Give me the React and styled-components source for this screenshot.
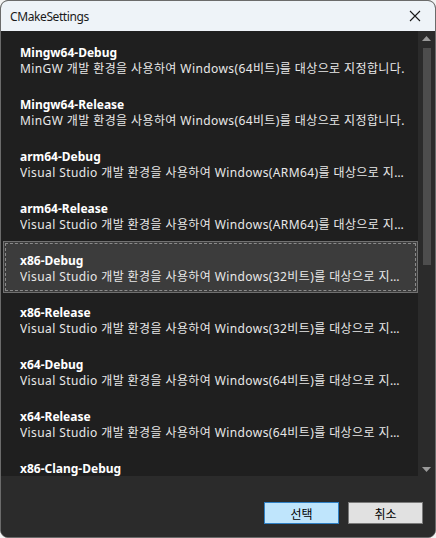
import styled, { createGlobalStyle } from 'styled-components';

const GlobalStyle = createGlobalStyle`
  html, body {
    margin: 0;
    padding: 0;
    background: #f3f3f3;
  }
  * {
    box-sizing: border-box;
  }
`;

const Window = styled.div`
  display: flex;
  flex-direction: column;
  width: 436px;
  height: 538px;
  border: 1px solid #6b6b6b;
  border-radius: 8px;
  overflow: hidden;
  background: #2b2b2b;
  font-family: "Noto Sans", "Noto Sans CJK KR", sans-serif;
  font-size: 12px;
`;

const TitleBar = styled.div`
  display: flex;
  align-items: center;
  justify-content: space-between;
  height: 30px;
  padding: 0 14px 0 9px;
  background: #eef3f8;
  color: #1a1a1a;

  span {
    font-size: 12px;
    letter-spacing: -0.4px;
  }
`;

const Body = styled.div`
  display: flex;
  height: 445px;
  background: #1f1f1f;
`;

const List = styled.div`
  flex: 1;
  overflow: hidden;
  padding: 2px 0 0 2px;
`;

const Item = styled.div`
  position: relative;
  height: 52px;
  padding: 11px 12px 0 16px;
  border: 1px solid ${p => (p.$selected ? '#707070' : 'transparent')};
  background: ${p => (p.$selected ? '#3c3c3c' : 'transparent')};
  line-height: 16px;

  &::after {
    content: '';
    display: ${p => (p.$selected ? 'block' : 'none')};
    position: absolute;
    inset: 1px;
    border: 1px dashed #8a8a8a;
  }

  .title {
    font-weight: 700;
    color: #ffffff;
  }
  .desc {
    color: #e8e8e8;
    white-space: nowrap;
    overflow: hidden;
    text-overflow: ellipsis;
    letter-spacing: 0.4px;
  }
`;

const Scrollbar = styled.div`
  display: flex;
  flex-direction: column;
  align-items: center;
  width: 17px;
  background: #2b2b2b;
  padding: 5px 0 4px;
`;

const Thumb = styled.div`
  width: 8px;
  height: 217px;
  margin-top: 7px;
  background: #4d4d4d;
`;

const Spacer = styled.div`
  flex: 1;
`;

const Footer = styled.div`
  flex: 1;
  display: flex;
  justify-content: flex-end;
  align-items: flex-end;
  gap: 9px;
  padding: 0 12px 13px 0;
  background: #2b2b2b;
`;

const Button = styled.button`
  width: 75px;
  height: 22px;
  padding: 0;
  font-family: "Noto Sans CJK KR", "Noto Sans", sans-serif;
  font-size: 12px;
  color: #000;
  background: ${p => (p.$primary ? '#bfe5fc' : '#e1e1e1')};
  border: 1px solid ${p => (p.$primary ? '#2f80c4' : '#7a7a7a')};
  border-radius: 0;
`;

const configs = [
  ['Mingw64-Debug', 'MinGW 개발 환경을 사용하여 Windows(64비트)를 대상으로 지정합니다.'],
  ['Mingw64-Release', 'MinGW 개발 환경을 사용하여 Windows(64비트)를 대상으로 지정합니다.'],
  ['arm64-Debug', 'Visual Studio 개발 환경을 사용하여 Windows(ARM64)를 대상으로 지정합니다.'],
  ['arm64-Release', 'Visual Studio 개발 환경을 사용하여 Windows(ARM64)를 대상으로 지정합니다.'],
  ['x86-Debug', 'Visual Studio 개발 환경을 사용하여 Windows(32비트)를 대상으로 지정합니다.'],
  ['x86-Release', 'Visual Studio 개발 환경을 사용하여 Windows(32비트)를 대상으로 지정합니다.'],
  ['x64-Debug', 'Visual Studio 개발 환경을 사용하여 Windows(64비트)를 대상으로 지정합니다.'],
  ['x64-Release', 'Visual Studio 개발 환경을 사용하여 Windows(64비트)를 대상으로 지정합니다.'],
  ['x86-Clang-Debug', 'Clang 컴파일러를 사용하여 Windows(32비트)를 대상으로 지정합니다.'],
];

export default function App() {
  return (
    <>
      <GlobalStyle />
      <Window>
        <TitleBar>
          <span>CMakeSettings</span>
          <svg width="12" height="12" viewBox="0 0 12 12">
            <path d="M1 1L11 11M11 1L1 11" stroke="#1a1a1a" strokeWidth="1.1" />
          </svg>
        </TitleBar>
        <Body>
          <List>
            {configs.map(([name, desc]) => (
              <Item key={name} $selected={name === 'x86-Debug'}>
                <div className="title">{name}</div>
                <div className="desc">{desc}</div>
              </Item>
            ))}
          </List>
          <Scrollbar>
            <svg width="9" height="5" viewBox="0 0 9 5">
              <path d="M4.5 0L9 5H0Z" fill="#9a9a9a" />
            </svg>
            <Thumb />
            <Spacer />
            <svg width="9" height="5" viewBox="0 0 9 5">
              <path d="M0 0H9L4.5 5Z" fill="#9a9a9a" />
            </svg>
          </Scrollbar>
        </Body>
        <Footer>
          <Button $primary>선택</Button>
          <Button>취소</Button>
        </Footer>
      </Window>
    </>
  );
}
